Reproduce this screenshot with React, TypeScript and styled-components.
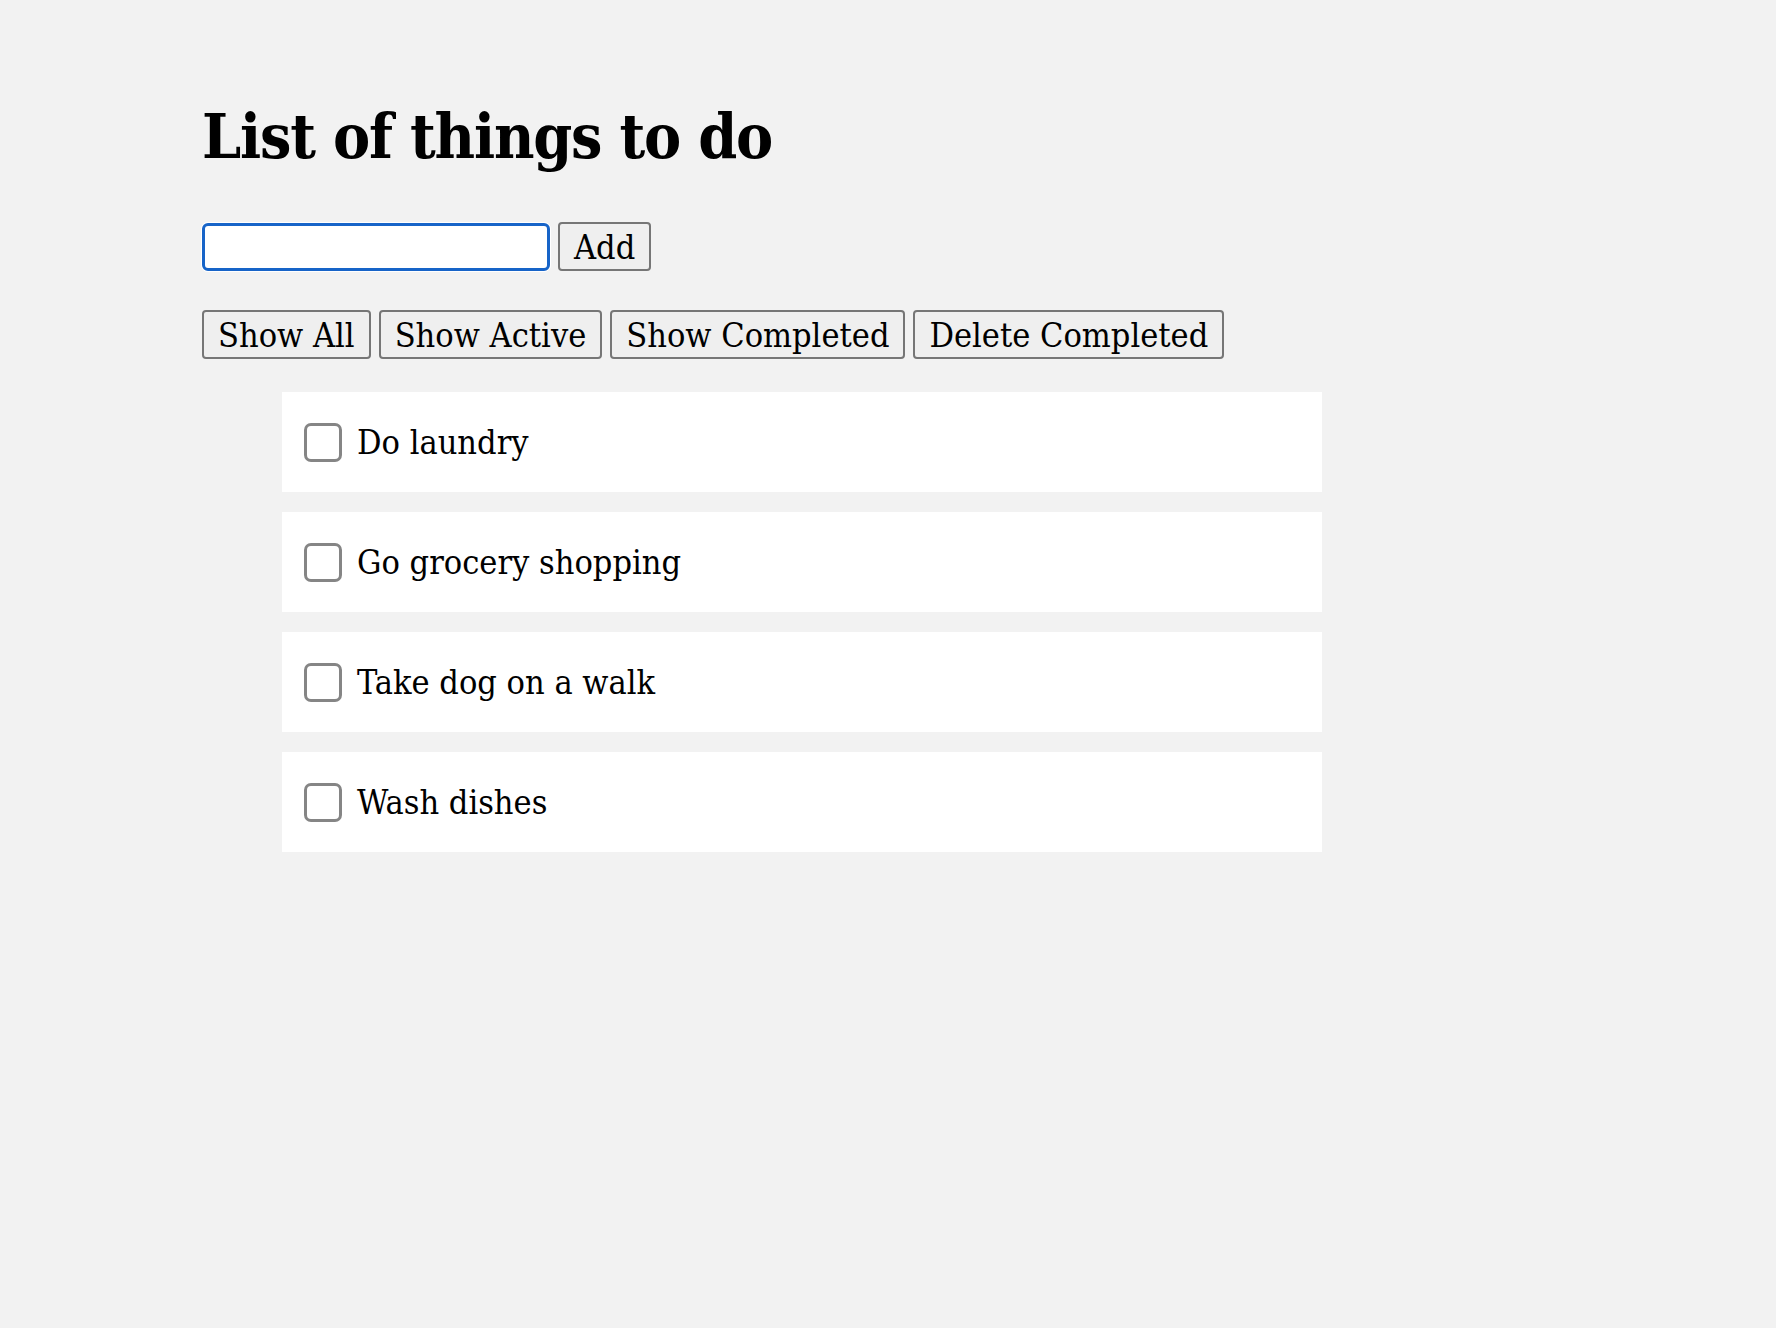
import React from "react";
import styled, { createGlobalStyle } from "styled-components";

const GlobalStyle = createGlobalStyle`
  html, body {
    margin: 0;
    padding: 0;
    background: #f2f2f2;
  }
  body {
    font-family: "DejaVu Serif Condensed", "DejaVu Serif", serif;
    font-stretch: condensed;
    color: #000;
  }
`;

const Page = styled.main`
  padding: 0 0 0 202px;
  min-height: 1328px;
  box-sizing: border-box;
`;

const Title = styled.h1`
  margin: 0;
  padding-top: 97px;
  font-size: 62px;
  line-height: 80px;
  font-weight: 700;
  letter-spacing: -1.2px;
`;

const AddForm = styled.form`
  display: flex;
  align-items: center;
  gap: 8px;
  margin-top: 45px;
`;

const TextInput = styled.input`
  box-sizing: border-box;
  width: 348px;
  height: 48px;
  border: 3.5px solid #1764c8;
  border-radius: 6px;
  background: #fff;
  box-shadow: 0 0 0 1px #fff;
  outline: none;
  font: inherit;
  font-size: 30px;
  padding: 0 8px;
`;

const Button = styled.button`
  box-sizing: border-box;
  height: 49px;
  padding: 0 14px;
  border: 2px solid #767676;
  border-radius: 4px;
  background: #efefef;
  color: #000;
  font-family: "DejaVu Serif Condensed", "DejaVu Serif", serif;
  font-stretch: condensed;
  font-size: 34px;
  line-height: 1;
  cursor: pointer;
`;

const FilterBar = styled.div`
  display: flex;
  gap: 8px;
  margin-top: 39px;
`;

const TodoList = styled.ul`
  list-style: none;
  margin: 33px 0 0 0;
  padding: 0 0 0 80px;
  width: 1040px;
  display: flex;
  flex-direction: column;
  gap: 20px;
`;

const TodoItem = styled.li`
  display: flex;
  align-items: center;
  gap: 15px;
  height: 100px;
  padding-left: 22px;
  background: #fff;
`;

const Check = styled.input`
  appearance: none;
  -webkit-appearance: none;
  box-sizing: border-box;
  width: 38px;
  height: 39px;
  margin: 0;
  border: 3px solid #858585;
  border-radius: 7px;
  background: #fff;
  cursor: pointer;
`;

const Label = styled.span`
  font-size: 34px;
  line-height: 1;
`;

const todos = ["Do laundry", "Go grocery shopping", "Take dog on a walk", "Wash dishes"];

export default function App() {
  return (
    <>
      <GlobalStyle />
      <Page>
        <Title>List of things to do</Title>
        <AddForm onSubmit={(e) => e.preventDefault()}>
          <TextInput type="text" aria-label="New todo" />
          <Button type="submit">Add</Button>
        </AddForm>
        <FilterBar>
          <Button type="button">Show All</Button>
          <Button type="button">Show Active</Button>
          <Button type="button">Show Completed</Button>
          <Button type="button">Delete Completed</Button>
        </FilterBar>
        <TodoList>
          {todos.map((t) => (
            <TodoItem key={t}>
              <Check type="checkbox" aria-label={t} />
              <Label>{t}</Label>
            </TodoItem>
          ))}
        </TodoList>
      </Page>
    </>
  );
}
